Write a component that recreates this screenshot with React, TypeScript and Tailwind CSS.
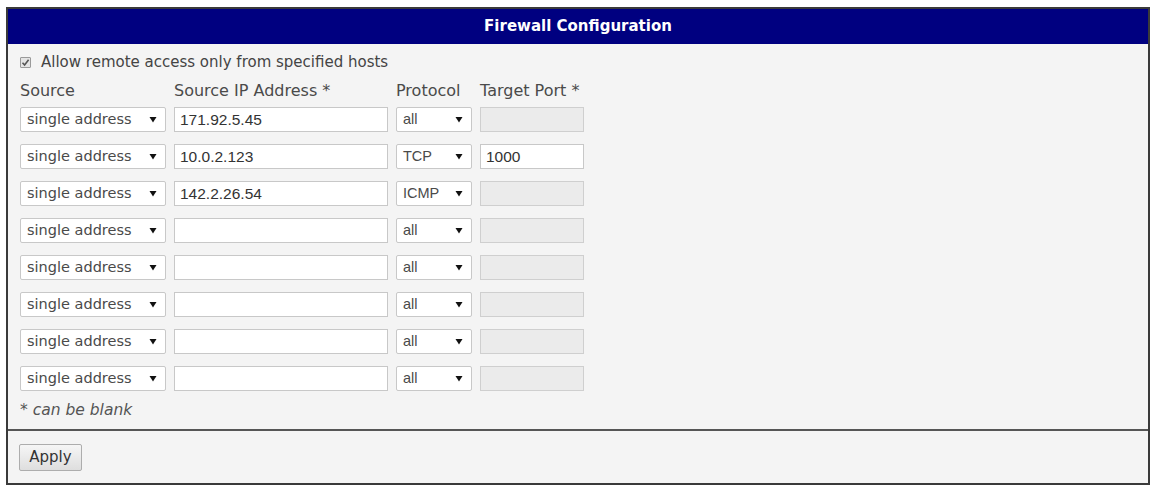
import React from 'react';

type Row = { ip: string; proto: string; port?: string };

const rows: Row[] = [
  { ip: '171.92.5.45', proto: 'all' },
  { ip: '10.0.2.123', proto: 'TCP', port: '1000' },
  { ip: '142.2.26.54', proto: 'ICMP' },
  { ip: '', proto: 'all' },
  { ip: '', proto: 'all' },
  { ip: '', proto: 'all' },
  { ip: '', proto: 'all' },
  { ip: '', proto: 'all' },
];

const Arrow: React.FC = () => (
  <svg width="8" height="7" viewBox="0 0 8 7" className="shrink-0">
    <path d="M0.5 1 L7.5 1 L4 6.5 Z" fill="#111" />
  </svg>
);

const FakeSelect: React.FC<{ value: string; className: string; arial?: boolean }> = ({ value, className, arial }) => (
  <div
    className={`h-[25px] flex items-center justify-between pl-[6px] pr-[8px] bg-white border border-[#c8c8c8] rounded-[2px] text-[#4a4a4a] ${
      arial ? "font-['Liberation_Sans',sans-serif] text-[14.5px]" : "font-['DejaVu_Sans',sans-serif] text-[14.5px]"
    } ${className}`}
  >
    <span>{value}</span>
    <Arrow />
  </div>
);

const App: React.FC = () => {
  return (
    <div className="min-h-screen bg-white pt-[7px] pl-[6px] font-['DejaVu_Sans',sans-serif]">
      <div className="w-[1144px] border-2 border-[#3a3a3a] bg-[#f4f4f4]">
        <div className="h-[35px] bg-[#000080] flex items-center justify-center text-white font-bold text-[15px]">
          Firewall Configuration
        </div>

        <div className="pl-[12px] pt-[9px]">
          <label className="flex items-center h-[18px] text-[15px] text-[#444]">
            <span className="w-[11px] h-[11px] mr-[10px] border border-[#9a9a9a] bg-[#e4e4e4] flex items-center justify-center rounded-[1px]">
              <svg width="9" height="9" viewBox="0 0 9 9">
                <path d="M1.5 4.8 L3.6 7 L7.6 1.8" stroke="#555" strokeWidth="1.6" fill="none" />
              </svg>
            </span>
            Allow remote access only from specified hosts
          </label>

          <div className="mt-[11px] flex h-[18px] items-center text-[16px] text-[#4a4a4a]">
            <span className="w-[154px]">Source</span>
            <span className="w-[222px]">Source IP Address *</span>
            <span className="w-[84px]">Protocol</span>
            <span>Target Port *</span>
          </div>

          <div className="mt-[7px] flex flex-col gap-[12px]">
            {rows.map((r, i) => (
              <div key={i} className="flex gap-[8px]">
                <FakeSelect value="single address" className="w-[146px]" />
                <div className="w-[214px] h-[25px] flex items-center pl-[5px] bg-white border border-[#c8c8c8] text-[15.5px] text-[#333] font-['Liberation_Sans',sans-serif]">
                  {r.ip}
                </div>
                <FakeSelect value={r.proto} arial className="w-[76px]" />
                {r.port !== undefined ? (
                  <div className="w-[104px] h-[25px] flex items-center pl-[5px] bg-white border border-[#c8c8c8] text-[15.5px] text-[#333] font-['Liberation_Sans',sans-serif]">
                    {r.port}
                  </div>
                ) : (
                  <div className="w-[104px] h-[25px] bg-[#ebebeb] border border-[#cfcfcf]" />
                )}
              </div>
            ))}
          </div>

          <div className="mt-[12px] h-[16px] flex items-center text-[15.5px] italic text-[#555]">
            * can be blank
          </div>
        </div>

        <div className="mt-[10px] h-[2px] bg-[#555]" />

        <div className="pl-[11px] pt-[13px] pb-[12px]">
          <button className="w-[63px] h-[27px] border border-[#adadad] rounded-[2px] bg-gradient-to-b from-[#f6f6f6] to-[#dedede] text-[15px] text-[#333] font-['DejaVu_Sans',sans-serif]">
            Apply
          </button>
        </div>
      </div>
    </div>
  );
};

export default App;
